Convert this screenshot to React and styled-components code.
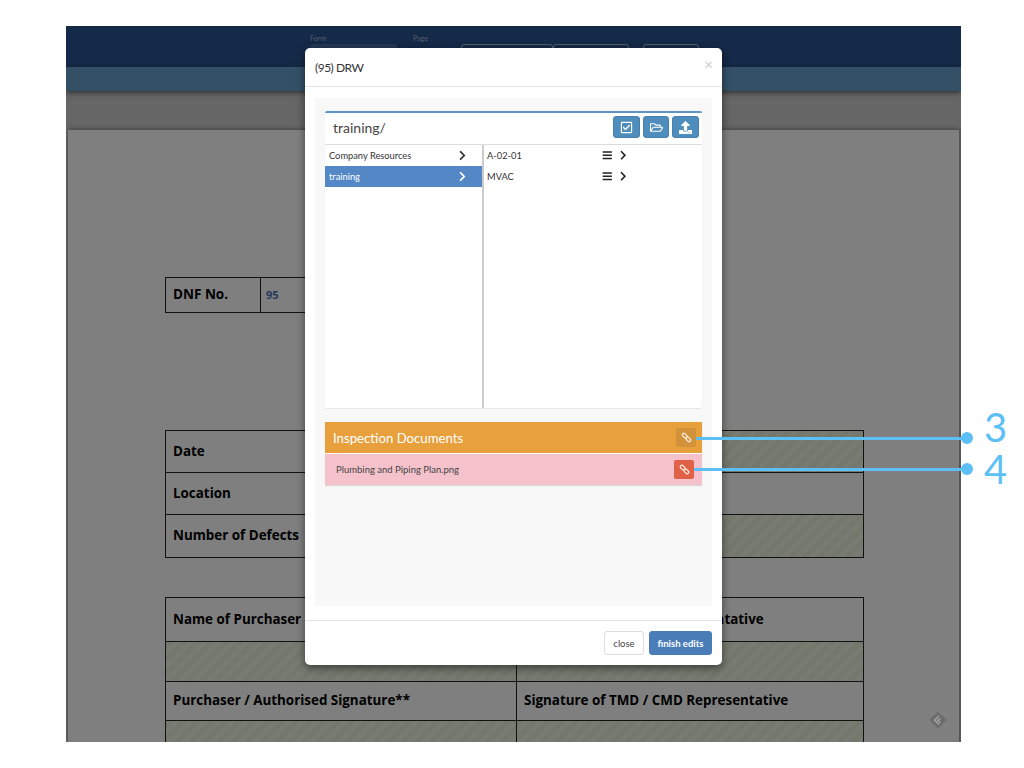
import React from 'react';
import styled, { createGlobalStyle } from 'styled-components';
import {
    FaRegCheckSquare,
    FaRegFolderOpen,
    FaUpload,
    FaChevronRight,
    FaBars,
} from 'react-icons/fa';

const GlobalStyle = createGlobalStyle`
    html, body {
        margin: 0;
        padding: 0;
        background: #ffffff;
        font-family: 'Lato', 'Liberation Sans', sans-serif;
    }
    * {
        box-sizing: border-box;
    }
`;

const PageBlock = styled.div`
    position: relative;
    width: 1024px;
    height: 768px;
    overflow: hidden;
    padding: 26px 63px 26px 66px;
`;

const FrameBlock = styled.div`
    position: relative;
    height: 716px;
    overflow: hidden;
    display: flex;
    flex-direction: column;
    background: #cccccc;
`;

const Backdrop = styled.div`
    position: absolute;
    inset: 0;
    background: rgba(0, 0, 0, 0.5);
`;

const TopBar = styled.div`
    height: 41px;
    flex-shrink: 0;
    background: #2a5290;
    display: flex;
    padding-left: 244px;
    color: #a8bcd4;
`;

const TopField = styled.div`
    width: ${(props) => props.$width}px;
    padding-top: 8px;
    font-size: 7px;
    line-height: 9px;
`;

const TopSelect = styled.div`
    width: 87px;
    height: 20px;
    margin-top: 1px;
    background: #4a6ea6;
    border-radius: 2px;
`;

const TopButton = styled.div`
    width: ${(props) => props.$width}px;
    height: 20px;
    margin: 18px ${(props) => props.$gap}px 0 0;
    border: 1px solid #a8bcd4;
    border-radius: 3px;
`;

const SubBar = styled.div`
    height: 24px;
    flex-shrink: 0;
    background: #68a0ce;
    box-shadow: 0 2px 5px rgba(0, 0, 0, 0.5);
    position: relative;
`;

const Band = styled.div`
    height: 39px;
    flex-shrink: 0;
`;

const Paper = styled.div`
    flex: 1;
    margin: 0 1px 0 2px;
    background: #ffffff;
    box-shadow: 0 -1px 4px rgba(0, 0, 0, 0.35);
    border-right: 1px solid #aaaaaa;
    padding: 147px 95px 0 97px;
    font-family: 'Open Sans', 'Noto Sans', sans-serif;
    color: #000000;
`;

const DnfTable = styled.div`
    display: grid;
    grid-template-columns: 95px 140px;
    width: 235px;
    height: 36px;
    border: 1px solid #222222;
    margin-bottom: 117px;
`;

const FormTable = styled.div`
    display: grid;
    grid-template-columns: ${(props) => props.$columns};
    border-top: 1px solid #222222;
    border-left: 1px solid #222222;
    margin-bottom: ${(props) => props.$bottom || 0}px;
`;

const Cell = styled.div`
    height: ${(props) => props.$height}px;
    border-right: 1px solid #222222;
    border-bottom: 1px solid #222222;
    padding: 0 0 2px 7px;
    display: flex;
    align-items: center;
    font-size: 13.4px;
    font-weight: 700;
    white-space: nowrap;
    background: ${(props) =>
        props.$fill
            ? 'repeating-linear-gradient(135deg, #e6f0d8 0 5px, #eef6e2 5px 10px)'
            : '#ffffff'};
`;

const DnfLabel = styled.div`
    border-right: 1px solid #222222;
    padding: 0 0 2px 7px;
    display: flex;
    align-items: center;
    font-size: 13.5px;
    font-weight: 700;
`;

const DnfValue = styled.div`
    padding: 0 0 2px 5px;
    display: flex;
    align-items: center;
    font-size: 11px;
    font-weight: 700;
    color: #4a72b8;
`;

const BadgeIcon = styled.svg`
    position: absolute;
    left: 862px;
    top: 684px;
    width: 20px;
    height: 20px;
    opacity: 0.9;
`;

const Modal = styled.div`
    position: absolute;
    left: 305px;
    top: 48px;
    width: 417px;
    height: 617px;
    display: flex;
    flex-direction: column;
    background: #ffffff;
    border-radius: 5px;
    box-shadow: 0 3px 9px rgba(0, 0, 0, 0.5);
    color: #333333;
    font-family: 'Lato', 'Liberation Sans', sans-serif;
`;

const ModalHeader = styled.div`
    height: 39px;
    flex-shrink: 0;
    border-bottom: 1px solid #e5e5e5;
    display: flex;
    align-items: center;
    justify-content: space-between;
    padding: 0 9px 0 10px;
`;

const ModalTitle = styled.div`
    font-size: 12px;
    letter-spacing: -0.5px;
`;

const CloseMark = styled.div`
    font-size: 15px;
    line-height: 15px;
    color: #cccccc;
    margin-top: -6px;
`;

const ModalBody = styled.div`
    height: 534px;
    flex-shrink: 0;
    padding: 11px 10px 14px;
    border-bottom: 1px solid #e5e5e5;
`;

const GrayPanel = styled.div`
    height: 100%;
    background: #f8f8f8;
    padding: 13px 10px 0;
`;

const BrowserCard = styled.div`
    height: 297px;
    background: #ffffff;
    border-top: 2px solid #5b94c4;
    border-radius: 2px;
    box-shadow: 0 1px 1px rgba(0, 0, 0, 0.08);
    display: flex;
    flex-direction: column;
`;

const CardHeader = styled.div`
    height: 32px;
    flex-shrink: 0;
    border-bottom: 1px solid #dddddd;
    display: flex;
    align-items: flex-start;
    justify-content: space-between;
    padding: 3px 3px 0 8px;
`;

const PathTitle = styled.div`
    font-size: 14px;
    line-height: 23px;
    color: #444444;
`;

const ToolGroup = styled.div`
    display: flex;
    gap: 3px;
`;

const ToolButton = styled.div`
    width: 26.67px;
    height: 22px;
    background: #4f8dbd;
    border: 1px solid #4580ae;
    border-radius: 3px;
    display: flex;
    align-items: center;
    justify-content: center;
    color: #ffffff;
    font-size: 13px;
`;

const Columns = styled.div`
    flex: 1;
    display: grid;
    grid-template-columns: 159px 1fr;
`;

const LeftColumn = styled.div`
    border-right: 2px solid #cccccc;
`;

const FolderRow = styled.div`
    height: 21px;
    display: flex;
    align-items: center;
    padding: 0 14px 0 4px;
    justify-content: space-between;
    font-size: 9.3px;
    background: ${(props) => (props.$active ? '#5387c6' : 'transparent')};
    color: ${(props) => (props.$active ? '#ffffff' : '#333333')};

    svg {
        font-size: 11px;
    }
`;

const FileRow = styled.div`
    height: 21px;
    display: flex;
    align-items: center;
    padding-left: 3px;
    font-size: 9.3px;
`;

const FileName = styled.div`
    width: 115px;
`;

const RowIcons = styled.div`
    display: flex;
    align-items: center;
    gap: 5px;
    font-size: 10.5px;
    color: #222222;
`;

const Section = styled.div`
    margin-top: 14px;
    box-shadow: 0 1px 1px rgba(0, 0, 0, 0.12);
`;

const SectionHeader = styled.div`
    height: 32px;
    background: #e8a03c;
    border-bottom: 1px solid #ffffff;
    display: flex;
    align-items: center;
    justify-content: space-between;
    padding: 0 6px 0 8px;
    color: #ffffff;
    font-size: 13.2px;
`;

const SectionRow = styled.div`
    height: 31px;
    background: #f5c2cc;
    display: flex;
    align-items: center;
    justify-content: space-between;
    padding: 0 8px 0 11px;
    font-size: 9.5px;
    color: #444444;
`;

const UnlinkButton = styled.div`
    width: ${(props) => props.$size}px;
    height: ${(props) => props.$size - 1}px;
    border-radius: 2px;
    background: ${(props) => props.$color};
    display: flex;
    align-items: center;
    justify-content: center;
    color: #ffe8d8;
`;

const ModalFooter = styled.div`
    flex: 1;
    display: flex;
    justify-content: flex-end;
    align-items: flex-start;
    gap: 5px;
    padding: 10px 10px 0 0;
`;

const FooterButton = styled.div`
    height: 24px;
    display: flex;
    align-items: center;
    justify-content: center;
    border-radius: 3px;
    font-size: 9.5px;
    width: ${(props) => (props.$primary ? 63 : 40)}px;
    font-weight: ${(props) => (props.$primary ? 700 : 400)};
    color: ${(props) => (props.$primary ? '#ffffff' : '#444444')};
    background: ${(props) => (props.$primary ? '#4a7db8' : '#ffffff')};
    border: 1px solid ${(props) => (props.$primary ? '#4a7db8' : '#dddddd')};
`;

const CalloutLine = styled.div`
    position: absolute;
    left: ${(props) => props.$left}px;
    top: ${(props) => props.$top}px;
    width: ${(props) => 967 - props.$left}px;
    height: 3px;
    background: #5cbff5;
`;

const CalloutDot = styled.div`
    position: absolute;
    left: 961px;
    top: ${(props) => props.$top}px;
    width: 12px;
    height: 12px;
    border-radius: 50%;
    background: #5cbff5;
`;

const CalloutNumber = styled.div`
    position: absolute;
    left: 984px;
    top: ${(props) => props.$top}px;
    font-size: 40px;
    line-height: 32px;
    font-weight: 400;
    color: #5cbff5;
    font-family: 'Lato', 'Liberation Sans', sans-serif;
`;

// two chain links, top left to bottom right, as the reference has them
const ChainIcon = () => (
    <svg width="11" height="11" viewBox="0 0 12 12" fill="none" stroke="currentColor" strokeWidth="1.4">
        <rect x="1" y="2.3" width="6" height="3.4" rx="1.7" transform="rotate(45 4 4)" />
        <rect x="5" y="6.3" width="6" height="3.4" rx="1.7" transform="rotate(45 8 8)" />
    </svg>
);

const App = () => {
    return (
        <>
            <GlobalStyle />
            <PageBlock>
                <FrameBlock>
                    <TopBar>
                        <TopField $width={103}>
                            Form
                            <TopSelect />
                        </TopField>
                        <TopField $width={48}>Page</TopField>
                        <TopButton $width={92} $gap={0} />
                        <TopButton $width={76} $gap={14} />
                        <TopButton $width={56} $gap={0} />
                    </TopBar>
                    <SubBar />
                    <Band />
                    <Paper>
                        <DnfTable>
                            <DnfLabel>DNF No.</DnfLabel>
                            <DnfValue>95</DnfValue>
                        </DnfTable>
                        <FormTable $columns="140px 1fr" $bottom={39}>
                            <Cell $height={42}>Date</Cell>
                            <Cell $height={42} $fill />
                            <Cell $height={42}>Location</Cell>
                            <Cell $height={42} />
                            <Cell $height={43}>Number of Defects</Cell>
                            <Cell $height={43} $fill />
                        </FormTable>
                        <FormTable $columns="351px 1fr">
                            <Cell $height={44}>Name of Purchaser</Cell>
                            <Cell $height={44}>Name of TMD / CMD Representative</Cell>
                            <Cell $height={40} $fill />
                            <Cell $height={40} $fill />
                            <Cell $height={39}>Purchaser / Authorised Signature**</Cell>
                            <Cell $height={39}>Signature of TMD / CMD Representative</Cell>
                            <Cell $height={40} $fill />
                            <Cell $height={40} $fill />
                        </FormTable>
                    </Paper>
                    <Backdrop />
                    <BadgeIcon viewBox="0 0 20 20">
                        <path d="M10 1.5 18.5 10 10 18.5 1.5 10Z" fill="#6a6a6a" />
                        <path
                            d="M11 6 6.5 10.2 11 14.5M12.5 8.5 9.8 10.5 12.5 12.8"
                            fill="none"
                            stroke="#a8a8a8"
                            strokeWidth="1.4"
                        />
                    </BadgeIcon>
                </FrameBlock>
                <Modal>
                    <ModalHeader>
                        <ModalTitle>(95) DRW</ModalTitle>
                        <CloseMark>×</CloseMark>
                    </ModalHeader>
                    <ModalBody>
                        <GrayPanel>
                            <BrowserCard>
                                <CardHeader>
                                    <PathTitle>training/</PathTitle>
                                    <ToolGroup>
                                        <ToolButton>
                                            <FaRegCheckSquare />
                                        </ToolButton>
                                        <ToolButton>
                                            <FaRegFolderOpen />
                                        </ToolButton>
                                        <ToolButton>
                                            <FaUpload />
                                        </ToolButton>
                                    </ToolGroup>
                                </CardHeader>
                                <Columns>
                                    <LeftColumn>
                                        <FolderRow>
                                            Company Resources
                                            <FaChevronRight />
                                        </FolderRow>
                                        <FolderRow $active>
                                            training
                                            <FaChevronRight />
                                        </FolderRow>
                                    </LeftColumn>
                                    <div>
                                        <FileRow>
                                            <FileName>A-02-01</FileName>
                                            <RowIcons>
                                                <FaBars />
                                                <FaChevronRight />
                                            </RowIcons>
                                        </FileRow>
                                        <FileRow>
                                            <FileName>MVAC</FileName>
                                            <RowIcons>
                                                <FaBars />
                                                <FaChevronRight />
                                            </RowIcons>
                                        </FileRow>
                                    </div>
                                </Columns>
                            </BrowserCard>
                            <Section>
                                <SectionHeader>
                                    Inspection Documents
                                    <UnlinkButton $size={20} $color="#d2923a">
                                        <ChainIcon />
                                    </UnlinkButton>
                                </SectionHeader>
                                <SectionRow>
                                    Plumbing and Piping Plan.png
                                    <UnlinkButton $size={20} $color="#e06048">
                                        <ChainIcon />
                                    </UnlinkButton>
                                </SectionRow>
                            </Section>
                        </GrayPanel>
                    </ModalBody>
                    <ModalFooter>
                        <FooterButton>close</FooterButton>
                        <FooterButton $primary>finish edits</FooterButton>
                    </ModalFooter>
                </Modal>
                <CalloutLine $left={696} $top={437} />
                <CalloutDot $top={432} />
                <CalloutNumber $top={411}>3</CalloutNumber>
                <CalloutLine $left={694} $top={468} />
                <CalloutDot $top={463} />
                <CalloutNumber $top={453}>4</CalloutNumber>
            </PageBlock>
        </>
    );
};

export default App;
